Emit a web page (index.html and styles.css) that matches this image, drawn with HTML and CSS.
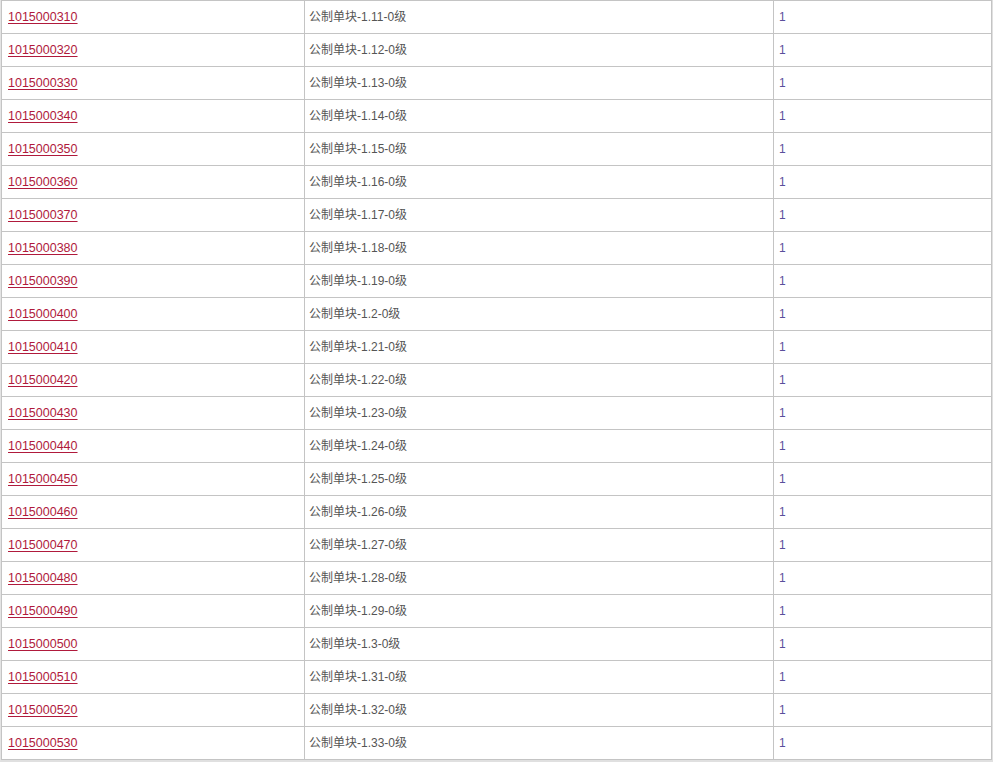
FILE: index.html
```html
<!DOCTYPE html>
<html>
<head>
<meta charset="utf-8">
<link rel="stylesheet" href="styles.css">
</head>
<body>
<div class="wrap">
<table class="list">
<colgroup><col class="c1"><col class="c2"><col class="c3"></colgroup>
<tbody>
<tr><td class="code"><a href="#">1015000310</a></td><td class="name">公制单块-1.11-0级</td><td class="qty">1</td></tr>
<tr><td class="code"><a href="#">1015000320</a></td><td class="name">公制单块-1.12-0级</td><td class="qty">1</td></tr>
<tr><td class="code"><a href="#">1015000330</a></td><td class="name">公制单块-1.13-0级</td><td class="qty">1</td></tr>
<tr><td class="code"><a href="#">1015000340</a></td><td class="name">公制单块-1.14-0级</td><td class="qty">1</td></tr>
<tr><td class="code"><a href="#">1015000350</a></td><td class="name">公制单块-1.15-0级</td><td class="qty">1</td></tr>
<tr><td class="code"><a href="#">1015000360</a></td><td class="name">公制单块-1.16-0级</td><td class="qty">1</td></tr>
<tr><td class="code"><a href="#">1015000370</a></td><td class="name">公制单块-1.17-0级</td><td class="qty">1</td></tr>
<tr><td class="code"><a href="#">1015000380</a></td><td class="name">公制单块-1.18-0级</td><td class="qty">1</td></tr>
<tr><td class="code"><a href="#">1015000390</a></td><td class="name">公制单块-1.19-0级</td><td class="qty">1</td></tr>
<tr><td class="code"><a href="#">1015000400</a></td><td class="name">公制单块-1.2-0级</td><td class="qty">1</td></tr>
<tr><td class="code"><a href="#">1015000410</a></td><td class="name">公制单块-1.21-0级</td><td class="qty">1</td></tr>
<tr><td class="code"><a href="#">1015000420</a></td><td class="name">公制单块-1.22-0级</td><td class="qty">1</td></tr>
<tr><td class="code"><a href="#">1015000430</a></td><td class="name">公制单块-1.23-0级</td><td class="qty">1</td></tr>
<tr><td class="code"><a href="#">1015000440</a></td><td class="name">公制单块-1.24-0级</td><td class="qty">1</td></tr>
<tr><td class="code"><a href="#">1015000450</a></td><td class="name">公制单块-1.25-0级</td><td class="qty">1</td></tr>
<tr><td class="code"><a href="#">1015000460</a></td><td class="name">公制单块-1.26-0级</td><td class="qty">1</td></tr>
<tr><td class="code"><a href="#">1015000470</a></td><td class="name">公制单块-1.27-0级</td><td class="qty">1</td></tr>
<tr><td class="code"><a href="#">1015000480</a></td><td class="name">公制单块-1.28-0级</td><td class="qty">1</td></tr>
<tr><td class="code"><a href="#">1015000490</a></td><td class="name">公制单块-1.29-0级</td><td class="qty">1</td></tr>
<tr><td class="code"><a href="#">1015000500</a></td><td class="name">公制单块-1.3-0级</td><td class="qty">1</td></tr>
<tr><td class="code"><a href="#">1015000510</a></td><td class="name">公制单块-1.31-0级</td><td class="qty">1</td></tr>
<tr><td class="code"><a href="#">1015000520</a></td><td class="name">公制单块-1.32-0级</td><td class="qty">1</td></tr>
<tr><td class="code"><a href="#">1015000530</a></td><td class="name">公制单块-1.33-0级</td><td class="qty">1</td></tr>
</tbody>
</table>
</div>
</body>
</html>
```
FILE: styles.css
```css
html, body {
  margin: 0;
  padding: 0;
  background: #fff;
}
body {
  font-family: "Liberation Sans", Arial, "Noto Sans CJK SC", sans-serif;
  font-size: 12px;
  color: #555;
}
.wrap {
  width: 990px;
  border-left: 1px solid #e4e4e4;
  border-right: 2px solid #e0e0e0;
  border-bottom: 2px solid #e0e0e0;
}
.list {
  width: 990px;
  border-collapse: collapse;
  table-layout: fixed;
}
.c1 { width: 303px; }
.c2 { width: 469px; }
.c3 { width: 218px; }
.list td {
  border: 1px solid #c4c4c4;
  height: 33px;
  padding: 0 4px;
  line-height: 16px;
  vertical-align: middle;
  box-sizing: border-box;
}
.list td.code { padding-left: 6px; font-size: 12.5px; }
.list a {
  color: #b01a3c;
  text-decoration: underline;
  text-underline-offset: 2px;
}
.list td.name { color: #555; }
.list td.qty { color: #5a4e9c; padding-left: 5px; }
```
